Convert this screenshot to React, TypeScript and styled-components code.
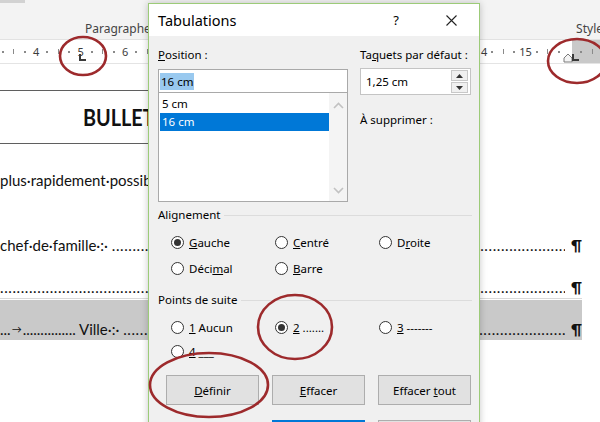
import React from 'react';
import styled, { createGlobalStyle } from 'styled-components';

const GlobalStyle = createGlobalStyle`
  html, body {
    margin: 0;
    padding: 0;
    background: #fff;
  }
  body {
    font-family: 'Noto Sans', 'Open Sans', sans-serif;
  }
`;

const Screen = styled.div`
  position: relative;
  width: 600px;
  height: 422px;
  overflow: hidden;
  background: #fff;
`;

/* ---------- Word window behind the dialog ---------- */

const Ribbon = styled.div`
  height: 40px;
  box-sizing: border-box;
  background: #f3f3f3;
  display: flex;
  flex-direction: column;
  justify-content: space-between;
  border-bottom: 1px solid #e2e2e2;
`;

const RibbonEdge = styled.div`
  display: flex;
  height: 3px;

  span {
    width: 25px;
    background: #d2d2d2;
  }
`;

const GroupLabels = styled.div`
  display: flex;
  justify-content: space-between;
  padding: 0 0 3px 85px;
  font: 12px 'Noto Sans', sans-serif;
  line-height: 15px;
  color: #444;

  span:last-child {
    margin-right: -3px;
  }
`;

const Ruler = styled.div`
  position: relative;
  height: 23px;
  background: linear-gradient(to right, #fff 572px, #c9c9c9 572px);
  border-bottom: 1px solid #e4e4e4;
  overflow: hidden;
`;

const RulerTrack = styled.div`
  display: flex;
  margin-left: -14px;
  height: 100%;
`;

const Quarter = styled.span`
  flex: 0 0 11.125px;
  min-width: 0;
  display: flex;
  align-items: center;
  justify-content: center;
  font: 11px 'Noto Sans', sans-serif;
  color: #3c3c3c;
  white-space: nowrap;
`;

const Dot = styled.i`
  width: 2px;
  height: 2px;
  background: #8a8a8a;
`;

const Tick = styled.i`
  width: 1px;
  height: 5px;
  background: #8a8a8a;
`;

const TabMark = styled.span<{ $x: number }>`
  position: absolute;
  left: ${(p) => p.$x}px;
  top: 14px;
  width: 5px;
  height: 5px;
  border-left: 2px solid #3a3a3a;
  border-bottom: 2px solid #3a3a3a;
`;

const IndentMark = styled.svg`
  position: absolute;
  left: 563px;
  top: 13px;
`;

const Page = styled.div`
  font-family: Lato, 'Liberation Sans', sans-serif;
  font-size: 15px;
  color: #111;
`;

const TitleCell = styled.div`
  margin-top: 26px;
  width: 380px;
  height: 52px;
  border-top: 1px solid #5f5f5f;
  border-bottom: 1px solid #5f5f5f;
  display: flex;
  align-items: center;
  padding-left: 83px;
  box-sizing: content-box;
  font-weight: 700;
  font-size: 22px;
  white-space: nowrap;
  overflow: hidden;

  span {
    transform: scaleX(0.9);
    transform-origin: left center;
  }
`;

const TextRow = styled.div<{ $gap: number }>`
  display: flex;
  align-items: center;
  width: 582px;
  height: 20px;
  margin-top: ${(p) => p.$gap}px;
  white-space: nowrap;
`;

const Leader = styled.span`
  flex: 1;
  overflow: hidden;
  white-space: nowrap;
  letter-spacing: 0.6px;
`;

const Pilcrow = styled.span`
  margin-left: 6px;
  font-weight: 700;
  font-size: 15px;
`;

const Rule = styled.div`
  margin-top: 1px;
  height: 1px;
  width: 582px;
  background: #d9d9d9;
`;

const Band = styled.div`
  margin-top: 1px;
  width: 582px;
  height: 40px;
  background: #c9c9c9;
  display: flex;
  align-items: flex-end;
  padding-bottom: 1px;
  box-sizing: border-box;

  ${TextRow} {
    margin-top: 0;
  }
`;

const Arrow = styled.span`
  font-size: 10px;
  margin: 0 1px;
`;

/* ---------- Tabulations dialog ---------- */

const Dialog = styled.div`
  position: absolute;
  left: 148px;
  top: 3px;
  width: 332px;
  height: 450px;
  box-sizing: border-box;
  border: 1px solid #9ccb78;
  background: #f0f0f0;
  box-shadow: 0 0 7px rgba(0, 0, 0, 0.22);
  font-family: 'Noto Sans', 'Open Sans', sans-serif;
  font-size: 11.5px;
  color: #000;
`;

const TitleBar = styled.div`
  height: 32px;
  background: #fff;
  display: flex;
  align-items: center;
  padding-left: 9px;
  font-size: 14.5px;
`;

const TitleText = styled.span`
  flex: 1;
`;

const HelpMark = styled.span`
  width: 20px;
  text-align: center;
  font-size: 13px;
  margin-right: 40px;
`;

const CloseBtn = styled.svg`
  margin-right: 22px;
`;

const Body = styled.div`
  padding: 11px 7px 0 9px;
`;

const TopGrid = styled.div`
  display: grid;
  grid-template-columns: 190px 111px;
  column-gap: 12px;
`;

const Col = styled.div`
  display: flex;
  flex-direction: column;
`;

const Label = styled.div<{ $mt?: number }>`
  line-height: 16px;
  margin-top: ${(p) => p.$mt ?? 0}px;
  white-space: nowrap;
`;

const K = styled.span`
  text-decoration: underline;
  text-underline-offset: 1px;
`;

const Field = styled.div`
  margin-top: 6px;
  height: 24px;
  box-sizing: border-box;
  border: 1px solid #a9a9a9;
  background: #fff;
  display: flex;
  align-items: center;
  padding-left: 1px;
`;

const Selected = styled.span`
  background: #99c9ef;
  padding: 0 1px;
  line-height: 17px;
`;

const ListBox = styled.div`
  height: 109px;
  box-sizing: border-box;
  border: 1px solid #a9a9a9;
  border-top: none;
  background: #fff;
  display: flex;
  padding-top: 2px;
`;

const Items = styled.div`
  flex: 1;
  padding-left: 1px;
`;

const Item = styled.div<{ $active?: boolean }>`
  height: 18px;
  line-height: 18px;
  padding-left: 2px;
  background: ${(p) => (p.$active ? '#0078d7' : 'transparent')};
  color: ${(p) => (p.$active ? '#fff' : '#000')};
`;

const ScrollBar = styled.div`
  width: 18px;
  margin-top: -2px;
  background: #f4f4f4;
  display: flex;
  flex-direction: column;
  justify-content: space-between;
  align-items: center;
  padding: 9px 0 7px;
`;

const Spin = styled.div`
  margin-top: 5px;
  height: 27px;
  box-sizing: border-box;
  border: 1px solid #c4c4c4;
  background: #fff;
  display: flex;
  align-items: center;
  padding: 0 2px 0 5px;
`;

const SpinValue = styled.span`
  flex: 1;
`;

const SpinButtons = styled.div`
  display: flex;
  flex-direction: column;
  gap: 1px;
`;

const SpinButton = styled.div`
  width: 17px;
  height: 11px;
  box-sizing: border-box;
  border: 1px solid #c8c8c8;
  background: #f0f0f0;
  display: flex;
  align-items: center;
  justify-content: center;
`;

const Legend = styled.div<{ $mt: number }>`
  display: flex;
  align-items: center;
  gap: 4px;
  margin-top: ${(p) => p.$mt}px;
  line-height: 16px;

  &::after {
    content: '';
    flex: 1;
    height: 1px;
    background: #dcdcdc;
  }
`;

const RadioGrid = styled.div<{ $mt: number; $gap: number }>`
  display: grid;
  grid-template-columns: repeat(3, 104px);
  row-gap: ${(p) => p.$gap}px;
  margin-top: ${(p) => p.$mt}px;
  padding-left: 13px;
`;

const Radio = styled.label`
  display: flex;
  align-items: center;
  gap: 5px;
  height: 20px;
  white-space: nowrap;
`;

const RadioCircle = styled.span<{ $on?: boolean }>`
  width: 13px;
  height: 13px;
  box-sizing: border-box;
  border-radius: 50%;
  border: 1px solid #333;
  background: #fff;
  display: flex;
  align-items: center;
  justify-content: center;

  &::after {
    content: '';
    width: 7px;
    height: 7px;
    border-radius: 50%;
    background: #333;
    display: ${(p) => (p.$on ? 'block' : 'none')};
  }
`;

const ButtonRow = styled.div<{ $mt: number }>`
  display: flex;
  justify-content: flex-end;
  gap: 13px;
  margin-top: ${(p) => p.$mt}px;
  padding-right: 1px;
`;

const Button = styled.div<{ $primary?: boolean }>`
  width: 93px;
  height: 30px;
  box-sizing: border-box;
  border: ${(p) => (p.$primary ? '2px solid #0078d7' : '1px solid #adadad')};
  background: #e1e1e1;
  display: flex;
  align-items: center;
  justify-content: center;
`;

const Annotations = styled.svg`
  position: absolute;
  left: 0;
  top: 0;
  pointer-events: none;
`;

const rulerCells = () => {
  const cells: React.ReactNode[] = [];
  for (let n = 3; n <= 17; n++) {
    cells.push(<Quarter key={`n${n}`}>{n === 16 ? '' : n}</Quarter>);
    cells.push(<Quarter key={`a${n}`}><Dot /></Quarter>);
    cells.push(<Quarter key={`b${n}`}><Tick /></Quarter>);
    cells.push(<Quarter key={`c${n}`}><Dot /></Quarter>);
  }
  return cells;
};

const dots = '.'.repeat(200);

const Chevron = ({ up }: { up?: boolean }) => (
  <svg width="11" height="7" viewBox="0 0 11 7">
    <polyline
      points={up ? '1,6 5.5,1.5 10,6' : '1,1 5.5,5.5 10,1'}
      fill="none"
      stroke="#c2c2c2"
      strokeWidth="1.6"
    />
  </svg>
);

const Triangle = ({ up }: { up?: boolean }) => (
  <svg width="7" height="4" viewBox="0 0 7 4">
    <polygon points={up ? '0,4 3.5,0 7,4' : '0,0 3.5,4 7,0'} fill="#333" />
  </svg>
);

const App: React.FC = () => {
  return (
    <Screen>
      <GlobalStyle />

      <Ribbon>
        <RibbonEdge>
          <span />
        </RibbonEdge>
        <GroupLabels>
          <span>Paragraphe</span>
          <span>Style</span>
        </GroupLabels>
      </Ribbon>

      <Ruler>
        <RulerTrack>{rulerCells()}</RulerTrack>
        <TabMark $x={79} />
        <IndentMark width="11" height="10" viewBox="0 0 11 10">
          <polygon points="1,9 1,5 5,1 9,5 9,9" fill="#f4f4f4" stroke="#7a7a7a" strokeWidth="1" />
        </IndentMark>
        <TabMark $x={572} />
      </Ruler>

      <Page>
        <TitleCell>
          <span>BULLETIN D'INSCRIPTION</span>
        </TitleCell>
        <TextRow $gap={26}>plus·rapidement·possible·à·l'adresse·suivante·:·</TextRow>
        <TextRow $gap={45}>
          chef·de·famille·:·&nbsp;<Leader>{dots}</Leader>
          <Pilcrow>¶</Pilcrow>
        </TextRow>
        <TextRow $gap={22}>
          <Leader>{dots}</Leader>
          <Pilcrow>¶</Pilcrow>
        </TextRow>
        <Rule />
        <Band>
          <TextRow $gap={0}>
            ...<Arrow>→</Arrow>............... Ville·:·&nbsp;<Leader>{dots}</Leader>
            <Pilcrow>¶</Pilcrow>
          </TextRow>
        </Band>
      </Page>

      <Dialog>
        <TitleBar>
          <TitleText>Tabulations</TitleText>
          <HelpMark>?</HelpMark>
          <CloseBtn width="11" height="11" viewBox="0 0 11 11">
            <path d="M0.5 0.5 L10.5 10.5 M10.5 0.5 L0.5 10.5" stroke="#222" strokeWidth="1.1" />
          </CloseBtn>
        </TitleBar>

        <Body>
          <TopGrid>
            <Col>
              <Label>
                <K>P</K>osition :
              </Label>
              <Field>
                <Selected>16 cm</Selected>
              </Field>
              <ListBox>
                <Items>
                  <Item>5 cm</Item>
                  <Item $active>16 cm</Item>
                </Items>
                <ScrollBar>
                  <Chevron up />
                  <Chevron />
                </ScrollBar>
              </ListBox>
            </Col>
            <Col>
              <Label>
                Ta<K>q</K>uets par défaut :
              </Label>
              <Spin>
                <SpinValue>1,25 cm</SpinValue>
                <SpinButtons>
                  <SpinButton>
                    <Triangle up />
                  </SpinButton>
                  <SpinButton>
                    <Triangle />
                  </SpinButton>
                </SpinButtons>
              </Spin>
              <Label $mt={17}>À supprimer :</Label>
            </Col>
          </TopGrid>

          <Legend $mt={5}>Alignement</Legend>
          <RadioGrid $mt={9} $gap={6}>
            <Radio>
              <RadioCircle $on />
              <span>
                <K>G</K>auche
              </span>
            </Radio>
            <Radio>
              <RadioCircle />
              <span>
                <K>C</K>entré
              </span>
            </Radio>
            <Radio>
              <RadioCircle />
              <span>
                D<K>r</K>oite
              </span>
            </Radio>
            <Radio>
              <RadioCircle />
              <span>
                Déci<K>m</K>al
              </span>
            </Radio>
            <Radio>
              <RadioCircle />
              <span>
                <K>B</K>arre
              </span>
            </Radio>
          </RadioGrid>

          <Legend $mt={14}>Points de suite</Legend>
          <RadioGrid $mt={9} $gap={4}>
            <Radio>
              <RadioCircle />
              <span>
                <K>1</K> Aucun
              </span>
            </Radio>
            <Radio>
              <RadioCircle $on />
              <span>
                <K>2</K> .......
              </span>
            </Radio>
            <Radio>
              <RadioCircle />
              <span>
                <K>3</K> -------
              </span>
            </Radio>
            <Radio>
              <RadioCircle />
              <span>
                <K>4</K> ___
              </span>
            </Radio>
          </RadioGrid>

          <ButtonRow $mt={14}>
            <Button>
              <span>
                <K>D</K>éfinir
              </span>
            </Button>
            <Button>
              <span>
                <K>E</K>ffacer
              </span>
            </Button>
            <Button>
              <span>
                Effacer <K>t</K>out
              </span>
            </Button>
          </ButtonRow>
          <ButtonRow $mt={15}>
            <Button $primary>OK</Button>
            <Button>Annuler</Button>
          </ButtonRow>
        </Body>
      </Dialog>

      <Annotations width="600" height="422" viewBox="0 0 600 422">
        <g fill="none" stroke="#9d2a2c" strokeWidth="2.6">
          <ellipse cx="83" cy="56" rx="23" ry="19" />
          <ellipse cx="577" cy="61" rx="29" ry="22" />
          <ellipse cx="295" cy="327" rx="37" ry="32" />
          <ellipse cx="209" cy="385" rx="59" ry="32" />
        </g>
      </Annotations>
    </Screen>
  );
};

export default App;
